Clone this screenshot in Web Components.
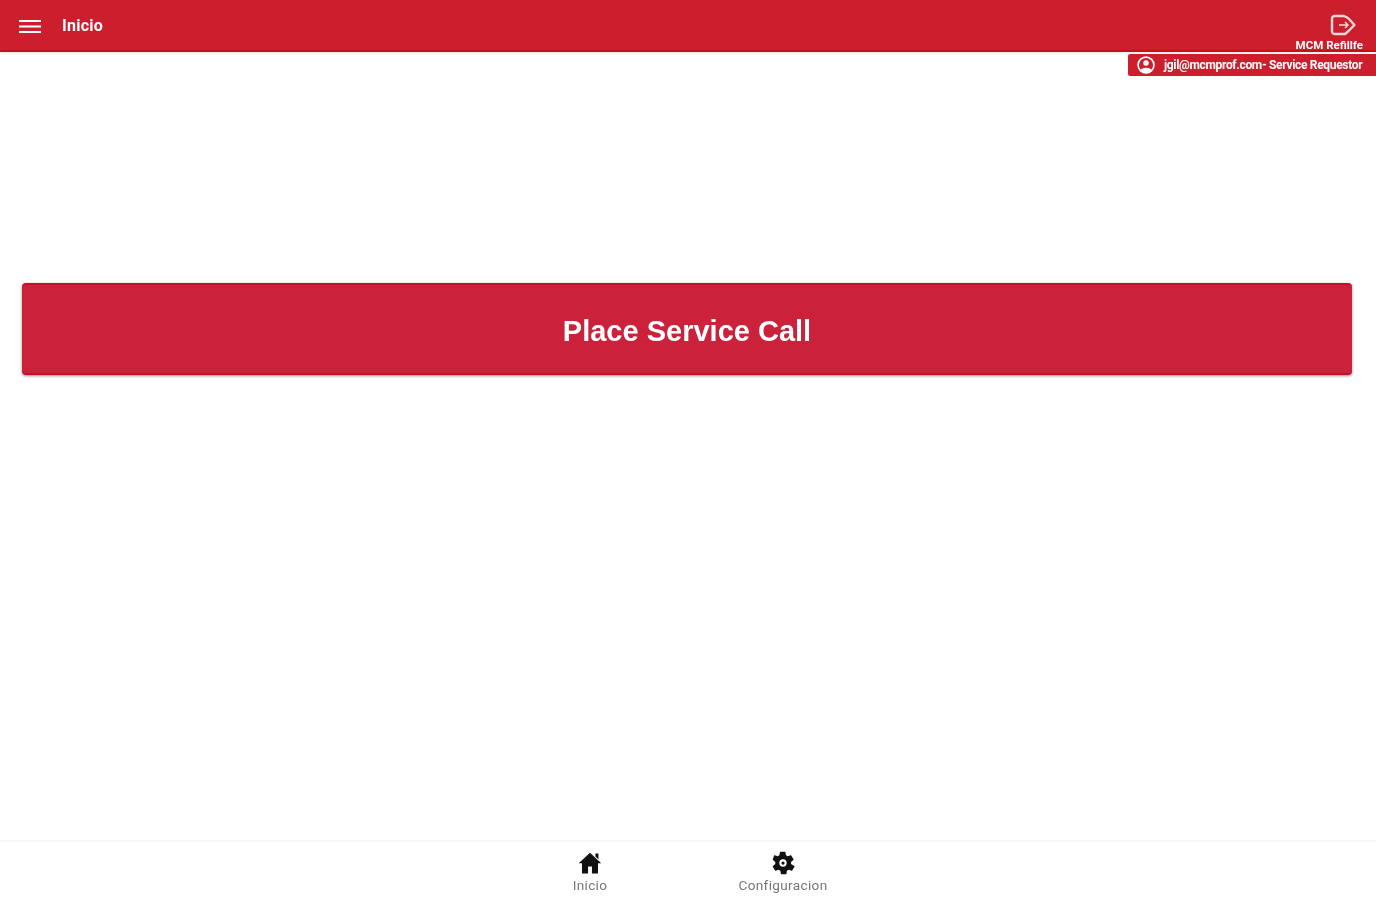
<!DOCTYPE html>
<html lang="es">
<head>
<meta charset="utf-8">
<title>Inicio</title>
<style>
  html, body {
    margin: 0;
    height: 100%;
    background: #fff;
    font-family: "Roboto", "Liberation Sans", sans-serif;
  }
  body {
    display: flex;
    flex-direction: column;
    height: 900px;
    overflow: hidden;
    position: relative;
  }
</style>
</head>
<body>
<app-header title-text="Inicio" brand="MCM Refillfe"></app-header>
<user-chip>jgil@mcmprof.com- Service Requestor</user-chip>
<home-view>
  <call-button>Place Service Call</call-button>
</home-view>
<bottom-nav>
  <nav-item label="Inicio" icon="home"></nav-item>
  <nav-item label="Configuracion" icon="gear"></nav-item>
</bottom-nav>

<script>
const ICONS = {
  home: `<path d="M12 2.6 1.6 12.2h3v9.4h5.6v-6.4h3.6v6.4h5.6v-9.4h3z"/><path d="M17 3.2h2.8v5.4L17 6z"/>`,
  gear: `<path fill-rule="evenodd" d="M19.4 13a7.6 7.6 0 0 0 0-2l2.2-1.7a.5.5 0 0 0 .1-.7l-2.1-3.6a.5.5 0 0 0-.6-.2l-2.6 1a7.6 7.6 0 0 0-1.7-1l-.4-2.8a.5.5 0 0 0-.5-.4h-4.2a.5.5 0 0 0-.5.4l-.4 2.8a7.6 7.6 0 0 0-1.7 1l-2.6-1a.5.5 0 0 0-.6.2L2.6 8.6a.5.5 0 0 0 .1.7L4.9 11a7.6 7.6 0 0 0 0 2l-2.2 1.7a.5.5 0 0 0-.1.7l2.1 3.6c.1.2.4.3.6.2l2.6-1c.5.4 1.1.7 1.7 1l.4 2.8c0 .2.3.4.5.4h4.2c.2 0 .5-.2.5-.4l.4-2.8c.6-.3 1.2-.6 1.7-1l2.6 1c.2.1.5 0 .6-.2l2.1-3.6a.5.5 0 0 0-.1-.7zM12 15.4a3.4 3.4 0 1 1 0-6.8 3.4 3.4 0 0 1 0 6.8z"/><circle cx="12" cy="12" r="1.500"/>`
};

class AppHeader extends HTMLElement {
  constructor() {
    super();
    this.attachShadow({mode: "open"});
    this.shadowRoot.innerHTML = `
      <style>
        :host {
          display: flex;
          flex: none;
          align-items: center;
          height: 50px;
          background: #cb1f2d;
          border-bottom: 2px solid #c5101f;
          box-shadow: 0 1px 3px rgba(0,0,0,.12);
          color: #fff;
          padding-left: 18px;
          filter: blur(.7px);
        }
        svg { display: block; }
        #menu { margin-top: 4px; }
        #title {
          margin-left: 20px;
          font: 700 16px "Roboto", "Liberation Sans", sans-serif;
          flex: 1;
          letter-spacing: .25px;
        }
        #right {
          display: flex;
          flex-direction: column;
          align-items: flex-end;
          padding-right: 13px;
          margin-top: 14px;
        }
        #right svg { margin-right: 5px; }
        #brand {
          font: 700 11.500px/12px "Roboto", "Liberation Sans", sans-serif;
          margin-top: 2px;
        }
      </style>
      <svg id="menu" width="24" height="18" viewBox="0 0 24 18" fill="none" stroke="#fff" stroke-width="2">
        <path d="M1 3h22M1 8.500h22M1 14h22"/>
      </svg>
      <span id="title"></span>
      <div id="right">
        <svg width="30" height="24" viewBox="0 0 28 24" fill="none" stroke="#f6d6d9" stroke-width="2.400" stroke-linejoin="round">
          <path d="M15 3H5.500A2.500 2.500 0 0 0 3 5.500v13A2.500 2.500 0 0 0 5.500 21H16l3-2.500L25.500 12 19 5z"/>
          <path d="M10 12h9M16 9l3 3-3 3" stroke-width="1.600"/>
        </svg>
        <span id="brand"></span>
      </div>
    `;
  }
  connectedCallback() {
    this.shadowRoot.querySelector("#title").textContent = this.getAttribute("title-text");
    this.shadowRoot.querySelector("#brand").textContent = this.getAttribute("brand");
  }
}
customElements.define("app-header", AppHeader);

// Sits over the page under the header, top right
class UserChip extends HTMLElement {
  constructor() {
    super();
    this.attachShadow({mode: "open"});
    this.shadowRoot.innerHTML = `
      <style>
        :host {
          position: absolute;
          top: 54px;
          right: 0;
          width: 248px;
          height: 22px;
          box-sizing: border-box;
          display: flex;
          align-items: center;
          padding-left: 8px;
          background: #cb1f2d;
          border-radius: 2px 0 0 2px;
          color: #fff;
          font: 700 12px "Roboto", "Liberation Sans", sans-serif;
          letter-spacing: -.32px;
          white-space: nowrap;
          filter: blur(.7px);
        }
        svg { display: block; margin-right: 8px; flex: none; }
      </style>
      <svg width="20" height="20" viewBox="0 0 24 24" fill="none" stroke="#fff" stroke-width="2">
        <circle cx="12" cy="12" r="9.500"/>
        <circle cx="12" cy="9.500" r="3.300" fill="#fff" stroke="none"/>
        <path d="M5.500 18c2-3.500 11-3.500 13 0-3 3.500-10 3.500-13 0z" fill="#fff" stroke="none"/>
      </svg>
      <slot></slot>
    `;
  }
}
customElements.define("user-chip", UserChip);

class HomeView extends HTMLElement {
  constructor() {
    super();
    this.attachShadow({mode: "open"});
    this.shadowRoot.innerHTML = `
      <style>
        :host {
          display: block;
          flex: 1;
          padding: 231px 24px 0 22px;
        }
      </style>
      <slot></slot>
    `;
  }
}
customElements.define("home-view", HomeView);

class CallButton extends HTMLElement {
  constructor() {
    super();
    this.attachShadow({mode: "open"});
    this.shadowRoot.innerHTML = `
      <style>
        :host {
          display: flex;
          align-items: center;
          justify-content: center;
          height: 92px;
          box-sizing: border-box;
          padding-top: 5px;
          background: #cb213b;
          border-top: 2px solid #c30f29;
          border-bottom: 2px solid #c30f29;
          border-radius: 4px;
          box-shadow: 0 1px 3px rgba(0,0,0,.45);
          color: #fff;
          font: 700 29px "Liberation Sans", sans-serif;
          filter: blur(.5px);
        }
      </style>
      <slot></slot>
    `;
  }
}
customElements.define("call-button", CallButton);

class BottomNav extends HTMLElement {
  constructor() {
    super();
    this.attachShadow({mode: "open"});
    this.shadowRoot.innerHTML = `
      <style>
        :host {
          display: flex;
          flex: none;
          justify-content: center;
          height: 58px;
          padding-right: 3px;
          border-top: 2px solid #f6f6f6;
          background: #fff;
        }
      </style>
      <slot></slot>
    `;
  }
}
customElements.define("bottom-nav", BottomNav);

class NavItem extends HTMLElement {
  constructor() {
    super();
    this.attachShadow({mode: "open"});
    this.shadowRoot.innerHTML = `
      <style>
        :host {
          display: flex;
          flex-direction: column;
          align-items: center;
          width: 193px;
          padding-top: 8px;
          filter: blur(.7px);
        }
        svg { display: block; fill: #111; }
        span {
          margin-top: 1px;
          font: 400 13.600px/16px "Roboto", "Liberation Sans", sans-serif;
          letter-spacing: .34px;
          color: #777;
        }
      </style>
      <svg width="26" height="26" viewBox="0 0 24 24"></svg>
      <span></span>
    `;
  }
  connectedCallback() {
    this.shadowRoot.querySelector("svg").innerHTML = ICONS[this.getAttribute("icon")];
    this.shadowRoot.querySelector("span").textContent = this.getAttribute("label");
  }
}
customElements.define("nav-item", NavItem);
</script>
</body>
</html>
